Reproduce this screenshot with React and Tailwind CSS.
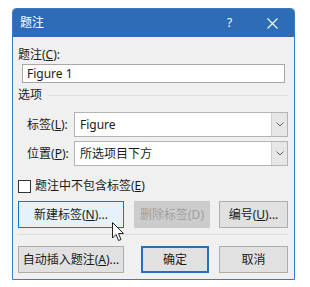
import React from 'react';

const font = { fontFamily: '"Noto Sans", "Noto Sans CJK SC", sans-serif' };

const Btn = ({ children, className = '' }) => (
  <div
    className={`h-[27px] flex items-center justify-center text-[12px] text-[#1a1a1a] border border-[#adadad] bg-[#e1e1e1] ${className}`}
  >
    {children}
  </div>
);

const Combo = ({ label, mn, value }) => (
  <div className="flex items-center">
    <div className="w-[56px] pl-[9px] text-[12px] text-[#1a1a1a]">
      {label}(<span className="underline">{mn}</span>):
    </div>
    <div className="flex-1 h-[25px] flex border border-[#b4b4b4] bg-white">
      <div className="flex-1 flex items-center pl-[5px] text-[12px] text-[#1a1a1a]">{value}</div>
      <div className="w-[16px] bg-[#e6e6e6] border-l border-[#cfcfcf] flex items-center justify-center">
        <svg width="8" height="5" viewBox="0 0 8 5" fill="none">
          <path d="M0.5 0.5 L4 4 L7.5 0.5" stroke="#606060" strokeWidth="1" />
        </svg>
      </div>
    </div>
  </div>
);

const App = () => {
  return (
    <div className="w-[310px] h-[287px] bg-white pl-[12px] pt-[8px] relative" style={font}>
      <div className="w-[283px] h-[272px] flex flex-col border border-[#3b7bc4] rounded-t-[4px] bg-[#f0f0f0] overflow-hidden">
        {/* Title bar */}
        <div className="h-[28px] bg-[#2d6db5] flex items-center text-white text-[12px]">
          <span className="pl-[7px] flex-1">题注</span>
          <span className="w-[43px] text-center">?</span>
          <span className="w-[43px] flex justify-center">
            <svg width="11" height="11" viewBox="0 0 11 11">
              <path d="M0.5 0.5 L10.5 10.5 M10.5 0.5 L0.5 10.5" stroke="white" strokeWidth="1.1" />
            </svg>
          </span>
        </div>

        {/* Body */}
        <div className="flex-1 flex flex-col pl-[5px] pr-[6px] text-[12px] text-[#1a1a1a]">
          <div className="mt-[10px] leading-[16px]">
            题注(<span className="underline">C</span>):
          </div>
          <div className="ml-[4px] mr-[3px] mt-[1px] h-[19px] border border-[#a8a8a8] bg-white flex items-center pl-[4px]">
            Figure 1
          </div>

          <div className="mt-[4px] flex items-center leading-[16px]">
            <span>选项</span>
            <div className="flex-1 ml-[6px] h-px bg-[#dcdcdc]" />
          </div>

          <div className="mt-[9px] flex flex-col gap-[4px]">
            <Combo label="标签" mn="L" value="Figure" />
            <Combo label="位置" mn="P" value="所选项目下方" />
          </div>

          <div className="mt-[12px] flex items-center leading-[16px]">
            <div className="w-[13px] h-[13px] border border-[#333] bg-white" />
            <span className="ml-[4px]">
              题注中不包含标签(<span className="underline">E</span>)
            </span>
          </div>

          <div className="mt-[7px] flex">
            <Btn className="w-[106px] !bg-[#e5f1fb] !border-[#0078d7]">
              新建标签(<span className="underline">N</span>)...
            </Btn>
            <Btn className="ml-[10px] w-[76px] !bg-[#cccccc] !border-[#cccccc] !text-[#a0a0a0]">
              删除标签(D)
            </Btn>
            <Btn className="ml-[9px] w-[69px]">
              编号(<span className="underline">U</span>)...
            </Btn>
          </div>

          <div className="mt-[6px] h-px bg-[#dcdcdc]" />

          <div className="mt-[11px] flex">
            <Btn className="w-[106px]">
              自动插入题注(<span className="underline">A</span>)...
            </Btn>
            <Btn className="ml-[17px] w-[68px] border-2 !border-[#2b6fb8]">确定</Btn>
            <Btn className="ml-[10px] w-[69px]">取消</Btn>
          </div>
        </div>
      </div>

      {/* Mouse cursor */}
      <svg className="absolute left-[112px] top-[222px]" width="13" height="20" viewBox="0 0 13 20">
        <path
          d="M0.5 0.5 L0.5 16 L4 12.5 L6.5 18.5 L9 17.5 L6.5 11.5 L11.5 11.5 Z"
          fill="white"
          stroke="#222"
          strokeWidth="1"
          strokeLinejoin="round"
        />
      </svg>
    </div>
  );
};

export default App;
